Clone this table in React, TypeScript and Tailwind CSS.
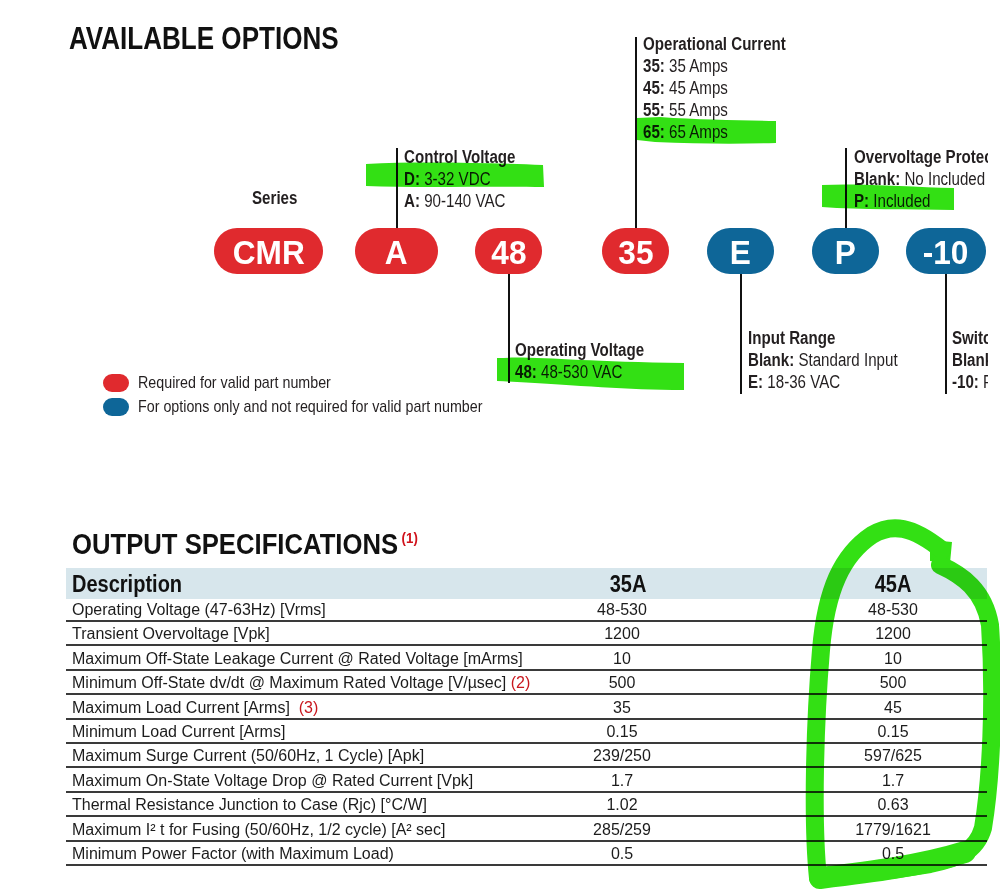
import React from "react";

const SANS = "font-['Liberation_Sans',Arial,sans-serif]";

function Pill({ cls, color, text, stem }: { cls: string; color: "red" | "blue"; text: string; stem?: string }) {
  return (
    <div
      className={`absolute top-[228px] h-[46px] rounded-full flex justify-center pt-[2px] text-white font-bold text-[34px] leading-[44px] ${
        color === "red" ? "bg-[#e02a2e]" : "bg-[#0e6698]"
      } ${cls}`}
    >
      <span className="inline-block scale-x-[0.93]">{text}</span>
      {stem && <div className={`absolute left-1/2 -ml-[1px] w-[2px] bg-[#111] ${stem}`} />}
    </div>
  );
}

function Label({ cls, lines }: { cls: string; lines: React.ReactNode[] }) {
  return (
    <div className={`absolute whitespace-nowrap text-[18px] leading-[22px] text-[#231f20] ${cls}`}>
      {lines.map((l, i) => (
        <div key={i} className="origin-left scale-x-[0.84]">
          {l}
        </div>
      ))}
    </div>
  );
}

type Row = { d: React.ReactNode; a: string; b: string };

const rows: Row[] = [
  { d: "Operating Voltage (47-63Hz) [Vrms]", a: "48-530", b: "48-530" },
  { d: "Transient Overvoltage [Vpk]", a: "1200", b: "1200" },
  { d: "Maximum Off-State Leakage Current @ Rated Voltage [mArms]", a: "10", b: "10" },
  {
    d: (
      <>
        Minimum Off-State dv/dt @ Maximum Rated Voltage [V/µsec] <span className="text-[#c8161d]">(2)</span>
      </>
    ),
    a: "500",
    b: "500",
  },
  {
    d: (
      <>
        Maximum Load Current [Arms]&nbsp; <span className="text-[#c8161d]">(3)</span>
      </>
    ),
    a: "35",
    b: "45",
  },
  { d: "Minimum Load Current [Arms]", a: "0.15", b: "0.15" },
  { d: "Maximum Surge Current (50/60Hz, 1 Cycle) [Apk]", a: "239/250", b: "597/625" },
  { d: "Maximum On-State Voltage Drop @ Rated Current [Vpk]", a: "1.7", b: "1.7" },
  { d: "Thermal Resistance Junction to Case (Rjc) [°C/W]", a: "1.02", b: "0.63" },
  { d: "Maximum I² t for Fusing (50/60Hz, 1/2 cycle) [A² sec]", a: "285/259", b: "1779/1621" },
  { d: "Minimum Power Factor (with Maximum Load)", a: "0.5", b: "0.5" },
];

export default function App() {
  return (
    <div className={`relative w-[1000px] h-[892px] bg-white overflow-hidden ${SANS}`}>
      <div className="w-[988px] h-[892px] overflow-hidden">
        {/* AVAILABLE OPTIONS */}
        <section className="relative h-[500px] pt-[23px] pl-[69px]">
          <h1 className="origin-left scale-x-[0.84] text-[31px] leading-[31px] font-bold text-[#111] whitespace-nowrap">
            AVAILABLE OPTIONS
          </h1>

          {/* part number diagram */}
          <Pill cls="left-[214px] w-[109px]" color="red" text="CMR" />
          <Pill cls="left-[355px] w-[83px]" color="red" text="A" stem="bottom-full h-[80px]" />
          <Pill cls="left-[475px] w-[67px]" color="red" text="48" stem="top-full h-[109px]" />
          <Pill cls="left-[602px] w-[67px]" color="red" text="35" stem="bottom-full h-[191px]" />
          <Pill cls="left-[707px] w-[67px]" color="blue" text="E" stem="top-full h-[120px]" />
          <Pill cls="left-[812px] w-[67px]" color="blue" text="P" stem="bottom-full h-[80px]" />
          <Pill cls="left-[906px] w-[80px]" color="blue" text="-10" stem="top-full h-[120px]" />

          <Label cls="left-[252px] top-[187px]" lines={[<b>Series</b>]} />
          <Label
            cls="left-[404px] top-[146px]"
            lines={[
              <b>Control Voltage</b>,
              <>
                <b>D:</b> 3-32 VDC
              </>,
              <>
                <b>A:</b> 90-140 VAC
              </>,
            ]}
          />
          <Label
            cls="left-[643px] top-[33px]"
            lines={[
              <b>Operational Current</b>,
              <>
                <b>35:</b> 35 Amps
              </>,
              <>
                <b>45:</b> 45 Amps
              </>,
              <>
                <b>55:</b> 55 Amps
              </>,
              <>
                <b>65:</b> 65 Amps
              </>,
            ]}
          />
          <Label
            cls="left-[854px] top-[146px]"
            lines={[
              <b>Overvoltage Protection</b>,
              <>
                <b>Blank:</b> No Included
              </>,
              <>
                <b>P:</b> Included
              </>,
            ]}
          />
          <Label
            cls="left-[515px] top-[339px]"
            lines={[
              <b>Operating Voltage</b>,
              <>
                <b>48:</b> 48-530 VAC
              </>,
            ]}
          />
          <Label
            cls="left-[748px] top-[327px]"
            lines={[
              <b>Input Range</b>,
              <>
                <b>Blank:</b> Standard Input
              </>,
              <>
                <b>E:</b> 18-36 VAC
              </>,
            ]}
          />
          <Label
            cls="left-[952px] top-[327px]"
            lines={[
              <b>Switching Type</b>,
              <>
                <b>Blank:</b> Standard
              </>,
              <>
                <b>-10:</b> Fast Turn-Off
              </>,
            ]}
          />

          {/* legend */}
          <div className="absolute left-[103px] top-[374px] flex flex-col gap-[6px] text-[17px] leading-[18px] text-[#231f20]">
            <div className="flex items-center gap-[9px]">
              <span className="w-[26px] h-[18px] rounded-full bg-[#e02a2e]" />
              <span className="inline-block origin-left scale-x-[0.84] whitespace-nowrap">Required for valid part number</span>
            </div>
            <div className="flex items-center gap-[9px]">
              <span className="w-[26px] h-[18px] rounded-full bg-[#0e6698]" />
              <span className="inline-block origin-left scale-x-[0.84] whitespace-nowrap">
                For options only and not required for valid part number
              </span>
            </div>
          </div>
        </section>

        {/* OUTPUT SPECIFICATIONS */}
        <section className="pt-[30px]">
          <h2 className="ml-[72px] h-[29px] origin-left scale-x-[0.885] text-[29px] leading-[29px] font-bold text-[#111] whitespace-nowrap">
            OUTPUT SPECIFICATIONS
            <span className="ml-[4px] inline-block align-top text-[15px] leading-[15px] text-[#d0121b]">(1)</span>
          </h2>

          <div className="ml-[66px] mt-[9px] w-[921px]">
            <div className="grid grid-cols-[379px_354px_188px] h-[31px] bg-[#d7e6ec] pt-[2px] text-[23px] leading-[29px] font-bold text-[#111]">
              <div className="pl-[6px]">
                <span className="inline-block origin-left scale-x-[0.87]">Description</span>
              </div>
              <div className="text-center pl-[12px]">
                <span className="inline-block scale-x-[0.87]">35A</span>
              </div>
              <div className="text-center">
                <span className="inline-block scale-x-[0.87]">45A</span>
              </div>
            </div>
            {rows.map((r, i) => (
              <div
                key={i}
                className={`grid grid-cols-[379px_354px_188px] items-end border-b-2 border-[#3a3a3a] text-[16px] leading-[20px] text-[#1c1c1c] ${
                  i === 0 ? "h-[23px]" : "h-[24.4px]"
                }`}
              >
                <div className="pl-[6px] whitespace-nowrap">{r.d}</div>
                <div className="text-center">{r.a}</div>
                <div className="text-center">{r.b}</div>
              </div>
            ))}
          </div>
        </section>
      </div>

      {/* highlighter marks */}
      <svg className="absolute left-0 top-0 w-[1000px] h-[892px] pointer-events-none mix-blend-multiply" viewBox="0 0 1000 892">
        <g fill="#33e014">
          <path d="M366 164 C420 161 490 163 543 165 L544 187 C490 186 420 188 366 186 Z" />
          <path d="M637 118 L660 117 C700 120 740 120 776 121 L776 143 C740 144 700 144 655 142 L637 140 Z" />
          <path d="M822 185 C860 183 910 187 954 188 L954 210 C910 209 860 210 822 207 Z" />
          <path d="M497 358 C540 356 580 362 684 363 L684 390 C620 390 580 385 497 381 Z" />
          <path d="M930 540 L952 542 L950 563 L930 561 Z" />
        </g>
        <g stroke="#33e014" fill="none" strokeLinecap="round" strokeLinejoin="round">
          <path
            d="M940 565 C962 575 984 590 990 625 C995 700 991 780 983 828 C976 852 958 858 930 864 C880 872 845 876 818 878 C812 820 815 720 821 650 C826 590 842 555 872 535 C892 523 912 526 942 550"
            strokeWidth="18"
          />
          <path d="M820 878 C870 872 920 866 965 852" strokeWidth="22" />
        </g>
      </svg>
    </div>
  );
}
